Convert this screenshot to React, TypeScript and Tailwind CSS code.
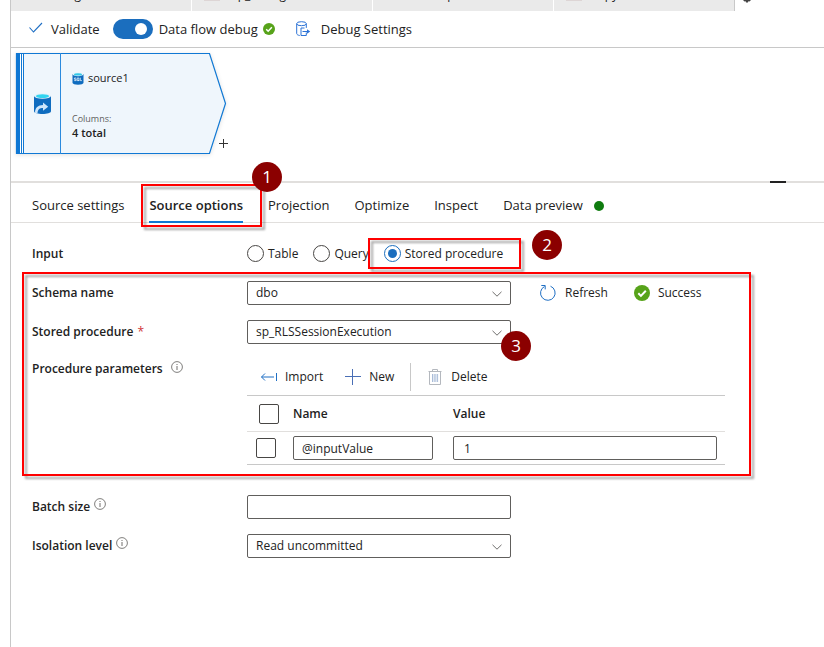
import { useState, type ReactNode } from 'react'
import clsx from 'clsx'

const tabs = ['Source settings', 'Source options', 'Projection', 'Optimize', 'Inspect', 'Data preview']
const inputTypes = ['Table', 'Query', 'Stored procedure']

const fieldClass = 'h-6 rounded-[2px] border border-[#605e5c] bg-white text-xs text-[#222] outline-none focus:border-[#0078d4]'
const checkboxClass = 'block size-5 appearance-none rounded-[2px] border border-[#484644] bg-white checked:bg-[#0078d4]'

function CheckCircle({ className }: { className?: string }) {
  return (
    <svg viewBox="0 0 16 16" className={className}>
      <circle cx="8" cy="8" r="8" fill="#57a31a" />
      <path d="M4.3 8.3l2.6 2.6 4.9-5.2" fill="none" stroke="#fff" strokeWidth="2" />
    </svg>
  )
}

function InfoIcon({ className }: { className?: string }) {
  return (
    <svg viewBox="0 0 12 12" className={clsx('size-3', className)} fill="none" stroke="#605e5c">
      <circle cx="6" cy="6" r="5.4" strokeWidth="0.8" />
      <path d="M6 5v4M6 3v1" strokeWidth="0.9" />
    </svg>
  )
}

function SqlIcon() {
  return (
    <svg viewBox="0 0 12 13" className="h-[13px] w-3">
      <path d="M0.5 2v8.8C0.5 12 3 12.8 6 12.8s5.500-.8 5.500-2V2z" fill="#0f6cbf" />
      <ellipse cx="6" cy="2.200" rx="5.500" ry="2" fill="#e6f5fb" />
      <ellipse cx="6" cy="2.400" rx="4" ry="1.200" fill="#32c8e8" />
      <g fill="none" stroke="#fff" strokeWidth="0.7">
        <path d="M4.200 6H2.400v1.200h1.700v1.400H2.200" />
        <path d="M5.200 6h1.700v2.600H5.200zM6.300 8l1 1" />
        <path d="M8.300 5.700v2.900h1.600" />
      </g>
    </svg>
  )
}

function SourceIcon() {
  return (
    <svg viewBox="0 0 17 21" className="h-[21px] w-[17px]">
      <path d="M0 3v15.300C0 20 4 21 8.500 21S17 20 17 18.300V3z" fill="#0f6cbf" />
      <ellipse cx="8.500" cy="3" rx="8.500" ry="2.800" fill="#e6f2fa" />
      <ellipse cx="8.500" cy="3.200" rx="6.500" ry="1.900" fill="#32d4f0" />
      <path d="M1 19.800C1 14.500 4 12 9 11.900V9.600l5.200 4.100-5.200 4v-2.600c-3.200 0-5.200 1-5.500 5.300z" fill="#cfe6fa" />
    </svg>
  )
}

// Red outline whose shadow also falls inside the frame
function Frame({ className }: { className: string }) {
  return (
    <div className={clsx('pointer-events-none absolute border-2 border-[#f00] drop-shadow-[3px_3px_1px_rgba(0,0,0,0.35)]', className)} />
  )
}

function Step({ n, className }: { n: number; className: string }) {
  return (
    <span className={clsx('absolute z-10 flex size-[30px] items-center justify-center rounded-full bg-[#8b0000] text-[17px] text-white', className)}>
      {n}
    </span>
  )
}

function Dropdown({ id, options }: { id: string; options: string[] }) {
  return (
    <div className="relative w-[264px]">
      <select id={id} className={clsx(fieldClass, 'block w-full appearance-none pl-2 pr-8')}>
        {options.map(o => <option key={o}>{o}</option>)}
      </select>
      <svg viewBox="0 0 10 6" className="pointer-events-none absolute right-[9px] top-2.5 h-1.5 w-2.5" fill="none" stroke="#605e5c">
        <path d="M0.500 0.800L5 5.200 9.500 0.800" strokeWidth="0.9" />
      </svg>
    </div>
  )
}

function Row({ label, htmlFor, children }: { label: ReactNode; htmlFor?: string; children: ReactNode }) {
  return (
    <div className="grid h-[39px] grid-cols-[215px_1fr] items-center">
      <label htmlFor={htmlFor} className="flex items-center font-semibold">{label}</label>
      <div className="flex items-center">{children}</div>
    </div>
  )
}

export default function App() {
  const [activeTab, setActiveTab] = useState('Source options')
  const [inputType, setInputType] = useState('Stored procedure')
  const [debug, setDebug] = useState(true)

  return (
    <div className="min-h-screen bg-white pl-2.5 font-['Open_Sans',sans-serif] text-[13px] leading-5 text-[#222]">
      <div className="min-h-screen border-l border-[#c8c8c8]">

        {/* OPEN FILES */}
        <div className="flex h-[11px] items-end overflow-hidden text-xs leading-5">
          <div className="flex h-full w-[181px] items-end border-r border-white bg-[#eaeaea] pl-7">
            <span className="pb-1.5">Catalog</span>
          </div>
          <div className="flex h-full w-[181px] items-end gap-3 border-r border-white bg-[#eaeaea] pl-3">
            <span className="mb-2.5 h-1 w-4 bg-[#ddd5d5]" />
            <span className="pb-1.5">sp_Config</span>
          </div>
          <div className="flex h-full w-[181px] items-end border-r border-white bg-[#eaeaea] pl-10">
            <span className="pb-1.5">Lookup</span>
          </div>
          <div className="flex h-full w-[181px] items-end gap-2 border-r border-[#c8c8c8] bg-[#eaeaea] pl-3">
            <span className="mb-2.5 h-1 w-4 bg-[#ddd5d5]" />
            <span className="pb-1.5">Copy</span>
          </div>
          <svg viewBox="0 0 8 3" className="mb-2 ml-2 h-[3px] w-2" fill="#444">
            <path d="M0 0h8L6.500 1.500 5.300 1.200 5 2.500H3L2.700 1.200 1.500 1.500z" />
          </svg>
        </div>

        {/* TOOLBAR */}
        <div className="flex h-[37px] items-center border-b border-[#c8c8c8] pl-[18px]">
          <button className="flex items-center gap-2">
            <svg viewBox="0 0 14 11" className="mb-1 h-[11px] w-3.5" fill="none" stroke="#1f6fc4">
              <path d="M0.500 5.500l4 4.500 8.500-9" strokeWidth="1.100" />
            </svg>
            Validate
          </button>
          <button
            role="switch"
            aria-checked={debug}
            aria-label="Data flow debug"
            onClick={() => setDebug(!debug)}
            className={clsx('ml-[13px] flex h-5 w-10 items-center rounded-full px-1.5', debug ? 'justify-end bg-[#1b6ebe]' : 'bg-gray-400')}
          >
            <span className="size-3 rounded-full bg-white" />
          </button>
          <span className="ml-1.5">Data flow debug</span>
          <CheckCircle className="ml-[5px] size-3" />
          <button className="ml-[21px] flex items-center gap-2.5">
            <svg viewBox="0 0 15 16" className="h-4 w-[15px]" fill="none" stroke="#2b72d6">
              <ellipse cx="5.500" cy="2.700" rx="4.800" ry="2" />
              <path d="M.7 2.700v9.800c0 1 1.200 1.700 3 2M10.300 2.700v4.200M5 7h3.500M5 7v7.500h5.300v-3M6.500 10.500H13" />
              <path d="M11 8.200l3.200 2.300-3.200 2.300z" fill="#2b72d6" stroke="none" />
            </svg>
            Debug Settings
          </button>
        </div>

        {/* DATA FLOW GRAPH */}
        <div className="h-[133px] pl-[5px] pt-[5px]">
          <div className="relative flex h-[101px] w-[210px]">
            <svg viewBox="0 0 210 101" className="absolute inset-0 size-full overflow-visible drop-shadow-[0_1px_2px_rgba(0,0,0,0.12)]">
              <path d="M.5.5H193.500L209.500 50.500 193.500 100.500H.5z" fill="#eff6fc" stroke="#1078d4" strokeWidth="1.200" />
              <path d="M4 1h4v99H4z" fill="#fff" />
              <path d="M0 0h4v101H0zM5 0h1v101H5zM7 0h1v101H7z" fill="#1078d4" />
              <path d="M44.500 0v101" stroke="#2b8add" fill="none" />
            </svg>
            <div className="relative flex w-[45px] items-center justify-end pr-2.5">
              <SourceIcon />
            </div>
            <div className="relative flex flex-col pl-[11px] pt-[15px] text-[11px] leading-5">
              <div className="flex items-center gap-1">
                <SqlIcon />
                source1
              </div>
              <span className="mt-6 text-[9px] leading-3.5 text-[#605e5c]">Columns:</span>
              <span className="leading-3.5 font-semibold">4 total</span>
            </div>
            <button aria-label="Add step" className="absolute -right-0.5 bottom-1.5">
              <svg viewBox="0 0 9 9" className="size-[9px]" stroke="#333">
                <path d="M4.500 0v9M0 4.500h9" />
              </svg>
            </button>
          </div>
        </div>
        <div className="flex h-0.5 justify-end bg-[#e1dfdd] pr-[38px]">
          <span className="w-4 bg-[#222]" />
        </div>

        {/* TABS */}
        <div className="flex h-10 items-center gap-[25px] border-b border-[#e1dfdd] pl-[21px]">
          {tabs.map(tab => (
            <div key={tab} className="relative h-10">
              <button
                onClick={() => setActiveTab(tab)}
                className={clsx('h-full border-b-2 pt-1.5', activeTab === tab ? 'border-[#1078d4] font-semibold' : 'border-transparent')}
              >
                {tab}
              </button>
              {tab === 'Source options' && (
                <>
                  <Frame className="-left-2 -right-[19px] top-px -bottom-1" />
                  <Step n={1} className="-right-[39px] -top-[21px]" />
                </>
              )}
            </div>
          ))}
          <span className="-ml-3.5 mt-1.5 size-2.5 rounded-full bg-[#107c10]" />
        </div>

        {/* FORM */}
        <div className="pl-[21px] pt-[11px] text-xs leading-5">
          <Row label="Input">
            <div role="radiogroup" aria-label="Input" className="flex items-center gap-[15px]">
              {inputTypes.map(type => (
                <div key={type} className="relative">
                  <label className="flex items-center gap-1">
                    <input
                      type="radio"
                      name="input-type"
                      checked={inputType === type}
                      onChange={() => setInputType(type)}
                      className="size-[17px] appearance-none rounded-full border border-[#484644] bg-white checked:border-[#1b6ebe] checked:bg-[#1b6ebe] checked:bg-clip-content checked:p-[3px]"
                    />
                    {type}
                  </label>
                  {type === 'Stored procedure' && (
                    <>
                      <Frame className="-left-4 -right-[18px] -top-1.5 h-[31px]" />
                      <Step n={2} className="-right-[59px] -top-3.5" />
                    </>
                  )}
                </div>
              ))}
            </div>
          </Row>

          <div className="relative max-w-[719px]">
            <Frame className="-left-2.5 right-0 -top-px bottom-[11px]" />
            <Row label="Schema name" htmlFor="schema">
              <Dropdown id="schema" options={['dbo']} />
              <button className="ml-7 flex items-center gap-2">
                <svg viewBox="0 0 18 18" className="size-[18px]" fill="none" stroke="#1f6fc4">
                  <path d="M5.500 2.500A7.300 7.300 0 1 0 11.500 2.200M2.300 1.500h3.900v3.900" />
                </svg>
                Refresh
              </button>
              <span className="ml-[26px] flex items-center gap-2">
                <CheckCircle className="size-4" />
                Success
              </span>
            </Row>
            <Row label={<>Stored procedure <span className="ml-1 font-normal text-[#d13438]">*</span></>} htmlFor="procedure">
              <div className="relative">
                <Dropdown id="procedure" options={['sp_RLSSessionExecution']} />
                <Step n={3} className="-right-5 top-[11px]" />
              </div>
            </Row>

            <div className="grid grid-cols-[215px_1fr] pb-[22px]">
              <div className="flex h-9 items-center font-semibold">
                Procedure parameters <InfoIcon className="mb-1 ml-2" />
              </div>
              <div className="pr-[26px] pt-3">
                <div className="mb-1 flex h-7 items-center pl-3.5">
                  <button className="flex items-center gap-2">
                    <svg viewBox="0 0 16 8" className="h-2 w-4" fill="none" stroke="#1f6fc4">
                      <path d="M.5 4H13M4 .5L.5 4 4 7.500M15.500 0v8" />
                    </svg>
                    Import
                  </button>
                  <button className="ml-[22px] flex items-center gap-2">
                    <svg viewBox="0 0 16 16" className="size-4" fill="#4a6fb5">
                      <path d="M7 0h1v7h8v1H8v8H7V8H0V7h7z" />
                    </svg>
                    New
                  </button>
                  <button className="ml-4 flex h-full items-center gap-2 border-l border-[#c8c8c8] pl-4">
                    <svg viewBox="0 0 16 16" className="size-4" fill="none" stroke="#b4b8be">
                      <path d="M1.500 2.500h13M5.500 2.500v-2h5v2M2.500 2.500v13h11v-13" />
                      <path d="M5.500 5v8M7.200 5v8M8.900 5v8M10.600 5v8" stroke="#a9bcd8" />
                    </svg>
                    Delete
                  </button>
                </div>
                <table className="w-full table-fixed border-collapse text-left">
                  <thead>
                    <tr className="h-9 border-y border-t-[#c8c8c8] border-b-[#e1dfdd]">
                      <th className="w-[46px] pl-3">
                        <input type="checkbox" aria-label="Select all" className={checkboxClass} />
                      </th>
                      <th className="w-40 font-semibold">Name</th>
                      <th className="font-semibold">Value</th>
                    </tr>
                  </thead>
                  <tbody>
                    <tr className="h-[33px] border-b border-[#c8c8c8]">
                      <td className="pl-[9px]">
                        <input type="checkbox" aria-label="Select @inputValue" className={checkboxClass} />
                      </td>
                      <td className="pr-5">
                        <input aria-label="Name" defaultValue="@inputValue" className={clsx(fieldClass, 'block w-full px-2')} />
                      </td>
                      <td className="pr-2">
                        <input aria-label="Value" defaultValue="1" className={clsx(fieldClass, 'block w-full px-2.5')} />
                      </td>
                    </tr>
                  </tbody>
                </table>
              </div>
            </div>
          </div>

          <Row label={<>Batch size <InfoIcon className="mb-1.5 ml-1" /></>} htmlFor="batch">
            <input id="batch" className={clsx(fieldClass, 'w-[264px] px-2')} />
          </Row>
          <Row label={<>Isolation level <InfoIcon className="mb-1.5 ml-1" /></>} htmlFor="isolation">
            <Dropdown id="isolation" options={['Read uncommitted']} />
          </Row>
        </div>
      </div>
    </div>
  )
}
